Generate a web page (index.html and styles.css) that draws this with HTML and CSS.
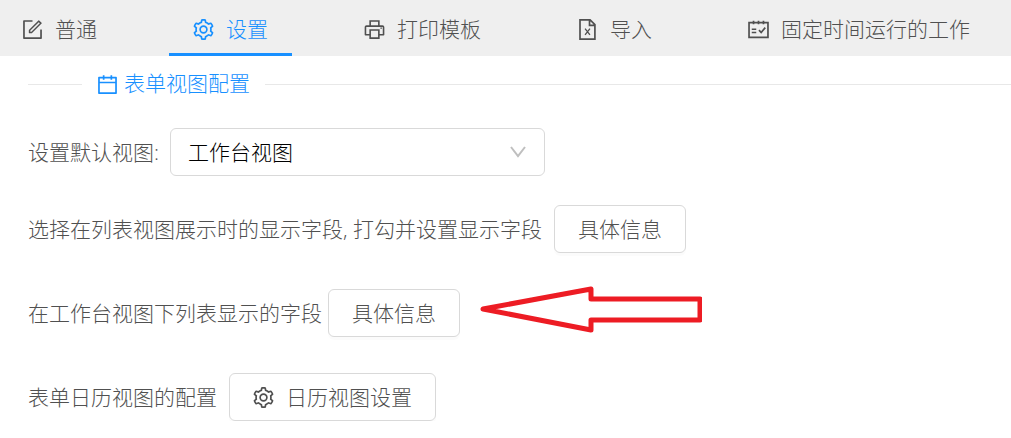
FILE: index.html
```html
<!DOCTYPE html>
<html lang="zh-CN">
<head>
<meta charset="utf-8">
<title>表单视图配置</title>
<link rel="stylesheet" href="styles.css">
</head>
<body>
<svg class="sprite" aria-hidden="true">
  <symbol id="form" viewBox="64 64 896 896"><path d="M904 512h-56c-4.4 0-8 3.6-8 8v320H184V184h320c4.4 0 8-3.6 8-8v-56c0-4.4-3.6-8-8-8H144c-17.7 0-32 14.3-32 32v736c0 17.7 14.3 32 32 32h736c17.7 0 32-14.3 32-32V520c0-4.4-3.6-8-8-8z"/><path d="M355.9 534.9L354 653.8c-.1 8.9 7.1 16.2 16 16.2h.4l118-2.9c2-.1 4-.9 5.4-2.3l415.9-415c3.1-3.1 3.1-8.2 0-11.3L785.4 114.3c-1.6-1.6-3.6-2.3-5.7-2.3s-4.1.8-5.7 2.3l-415.8 415a8.3 8.3 0 00-2.3 5.6zm63.5 23.6L779.7 199l45.2 45.1-360.5 359.7-45.7 1.1.7-46.4z"/></symbol>
  <symbol id="gear" viewBox="64 64 896 896"><path d="M924.8 625.7l-65.5-56c3.1-19 4.7-38.4 4.7-57.8s-1.6-38.8-4.7-57.8l65.5-56a32.03 32.03 0 009.3-35.2l-.9-2.6a443.74 443.74 0 00-79.7-137.9l-1.8-2.1a32.12 32.12 0 00-35.1-9.5l-81.3 28.9c-30-24.6-63.5-44-99.7-57.6l-15.7-85a32.05 32.05 0 00-25.8-25.7l-2.7-.5c-52.1-9.4-106.9-9.4-159 0l-2.7.5a32.05 32.05 0 00-25.8 25.7l-15.8 85.4a351.86 351.86 0 00-99 57.4l-81.9-29.1a32 32 0 00-35.1 9.5l-1.8 2.1a446.02 446.02 0 00-79.7 137.9l-.9 2.6c-4.5 12.5-.8 26.5 9.3 35.2l66.3 56.6c-3.1 18.8-4.6 38-4.6 57.1 0 19.2 1.5 38.4 4.6 57.1L99 625.5a32.03 32.03 0 00-9.3 35.2l.9 2.6c18.1 50.4 44.9 96.9 79.7 137.9l1.8 2.1a32.12 32.12 0 0035.1 9.5l81.9-29.1c29.8 24.5 63.1 43.9 99 57.4l15.8 85.4a32.05 32.05 0 0025.8 25.7l2.7.5a449.4 449.4 0 00159 0l2.7-.5a32.05 32.05 0 0025.8-25.7l15.7-85a350 350 0 0099.7-57.6l81.3 28.9a32 32 0 0035.1-9.5l1.8-2.1c34.8-41.1 61.6-87.5 79.7-137.9l.9-2.6c4.5-12.3.8-26.3-9.3-35zM788.3 465.9c2.5 15.1 3.8 30.6 3.8 46.1s-1.3 31-3.8 46.1l-6.6 40.1 74.7 63.9a370.03 370.03 0 01-42.6 73.6L721 702.8l-31.4 25.8c-23.9 19.6-50.5 35-79.3 45.8l-38.1 14.3-17.9 97a377.5 377.5 0 01-85 0l-17.9-97.2-37.8-14.5c-28.5-10.8-55-26.2-78.7-45.7l-31.4-25.9-93.4 33.2c-17-22.9-31.2-47.6-42.6-73.6l75.5-64.5-6.5-40c-2.4-14.9-3.7-30.3-3.7-45.5 0-15.3 1.2-30.6 3.7-45.5l6.5-40-75.5-64.5c11.3-26.1 25.6-50.7 42.6-73.6l93.4 33.2 31.4-25.9c23.7-19.5 50.2-34.9 78.7-45.7l37.9-14.3 17.9-97.2c28.1-3.2 56.8-3.2 85 0l17.9 97 38.1 14.3c28.7 10.8 55.4 26.2 79.3 45.8l31.4 25.8 92.8-32.9c17 22.9 31.2 47.6 42.6 73.6L781.8 426l6.5 39.9z"/><circle class="line" cx="512" cy="510" r="144"/></symbol>
  <symbol id="printer" viewBox="64 64 896 896"><path d="M852 332H732V120c0-4.4-3.6-8-8-8H300c-4.4 0-8 3.6-8 8v212H172c-44.2 0-80 35.8-80 80v328c0 17.7 14.3 32 32 32h168v132c0 4.4 3.6 8 8 8h424c4.4 0 8-3.6 8-8V772h168c17.7 0 32-14.3 32-32V412c0-44.2-35.8-80-80-80zM360 180h304v152H360V180zm304 664H360V568h304v276zm200-140H732V500H292v204H160V412c0-6.6 5.4-12 12-12h680c6.6 0 12 5.4 12 12v292z"/><path d="M764 428h64v56h-64z"/></symbol>
  <symbol id="sheet" viewBox="64 64 896 896"><path class="line" d="M192 100h430l206 206v618H192zM598 100v232h230"/><path class="line line-thin" d="M408 472l208 272M616 472L408 744"/></symbol>
  <symbol id="schedule" viewBox="64 64 896 896"><path class="line" d="M108 220h808v628H108zM300 136v148M512 136v148M724 136v148M224 500h192M224 640h192M532 536l94 104 174-208"/></symbol>
  <symbol id="calendar" viewBox="64 64 896 896"><path d="M880 184H712v-64c0-4.4-3.6-8-8-8h-56c-4.4 0-8 3.6-8 8v64H384v-64c0-4.4-3.6-8-8-8h-56c-4.4 0-8 3.6-8 8v64H144c-17.7 0-32 14.3-32 32v664c0 17.7 14.3 32 32 32h736c17.7 0 32-14.3 32-32V216c0-17.7-14.3-32-32-32zm-40 656H184V460h656v380zM184 392V256h128v48c0 4.4 3.6 8 8 8h56c4.4 0 8-3.6 8-8v-48h256v48c0 4.4 3.6 8 8 8h56c4.4 0 8-3.6 8-8v-48h128v136H184z"/></symbol>
</svg>
<nav class="tabs" role="tablist">
  <button class="tab" type="button" role="tab"><svg class="icon"><use href="#form"/></svg><span class="tab-label">普通</span></button>
  <button class="tab tab-active" type="button" role="tab" aria-selected="true"><svg class="icon"><use href="#gear"/></svg><span class="tab-label">设置</span></button>
  <button class="tab" type="button" role="tab"><svg class="icon"><use href="#printer"/></svg><span class="tab-label">打印模板</span></button>
  <button class="tab" type="button" role="tab"><svg class="icon"><use href="#sheet"/></svg><span class="tab-label">导入</span></button>
  <button class="tab" type="button" role="tab"><svg class="icon"><use href="#schedule"/></svg><span class="tab-label">固定时间运行的工作</span></button>
</nav>
<main class="panel">
  <h2 class="divider"><span class="divider-text"><svg class="icon"><use href="#calendar"/></svg><span class="divider-label">表单视图配置</span></span></h2>
  <div class="rows">
    <div class="row row-select">
      <label for="view">设置默认视图:</label>
      <div class="select-box">
        <select id="view" class="select"><option>工作台视图</option></select>
        <svg class="chevron" viewBox="0 0 16 12" aria-hidden="true"><path d="M1 1l7 9 7-9"/></svg>
      </div>
    </div>
    <div class="row">
      <span>选择在列表视图展示时的显示字段, 打勾并设置显示字段</span>
      <button class="btn" type="button">具体信息</button>
    </div>
    <div class="row row-tight">
      <span>在工作台视图下列表显示的字段</span>
      <button class="btn" type="button">具体信息</button>
      <svg class="arrow" viewBox="0 0 222 48" aria-hidden="true"><path d="M3 24L111 4v10h109v21H111v10z"/></svg>
    </div>
    <div class="row">
      <span>表单日历视图的配置</span>
      <button class="btn" type="button"><svg class="icon"><use href="#gear"/></svg>日历视图设置</button>
    </div>
  </div>
</main>
</body>
</html>
```
FILE: styles.css
```css
* {
  box-sizing: border-box;
}

body {
  margin: 0;
  background: #fff;
  color: #505050;
  font: 300 21px/32px "Open Sans", "Noto Sans CJK SC", sans-serif;
  white-space: nowrap;
  overflow-x: hidden;
}

button,
select {
  font: inherit;
  color: inherit;
}

.sprite {
  position: absolute;
  width: 0;
  height: 0;
}

.icon {
  flex: none;
  width: 21px;
  height: 21px;
  fill: currentColor;
}

.line {
  fill: none;
  stroke: currentColor;
  stroke-width: 72;
}

.line-thin {
  stroke-width: 56;
}

.tabs {
  display: flex;
  gap: 48px;
  height: 56px;
  background: #efefef;
}

.tab {
  display: flex;
  flex: none;
  align-items: center;
  gap: 12px;
  padding: 6px 24px 0;
  border: 0;
  border-bottom: 3px solid transparent;
  background: none;
}

.tab:first-child {
  padding-left: 22px;
}

.tab-label {
  padding-bottom: 2px;
}

.tab-active {
  color: #1890ff;
  border-bottom-color: #1890ff;
}

.panel {
  padding-left: 28px;
}

.divider {
  display: flex;
  align-items: center;
  gap: 15px;
  margin: 0;
  height: 57px;
  color: #1890ff;
  font: inherit;
}

.divider::before,
.divider::after {
  content: "";
  width: 54px;
  height: 1px;
  background: #e8e8e8;
}

.divider::after {
  flex: 1;
}

.divider-text {
  display: flex;
  align-items: center;
  gap: 6px;
}

.divider-label {
  padding-bottom: 4px;
}

.rows {
  display: flex;
  flex-direction: column;
  gap: 36px;
  padding-top: 15px;
}

.row {
  display: flex;
  align-items: center;
  gap: 12px;
}

.row-select {
  gap: 11px;
  margin-bottom: -7px;
}

.row-tight {
  gap: 6px;
}

.select-box {
  position: relative;
  width: 375px;
}

.select {
  display: block;
  width: 100%;
  height: 48px;
  padding: 0 17px;
  border: 1px solid #d9d9d9;
  border-radius: 6px;
  background: #fff;
  color: #000;
  appearance: none;
}

.chevron {
  position: absolute;
  top: 18px;
  right: 19px;
  width: 16px;
  height: 12px;
  fill: none;
  stroke: #bfbfbf;
  stroke-width: 2;
}

.btn {
  display: flex;
  align-items: center;
  gap: 12px;
  height: 48px;
  padding: 0 23px;
  border: 1px solid #d9d9d9;
  border-radius: 6px;
  background: #fff;
  box-shadow: 0 3px 0 rgba(0, 0, 0, 0.015);
}

.arrow {
  width: 222px;
  height: 48px;
  margin: -8px 0 0 14px;
  fill: none;
  stroke: #ed1c24;
  stroke-width: 5;
  stroke-linejoin: round;
}
```
